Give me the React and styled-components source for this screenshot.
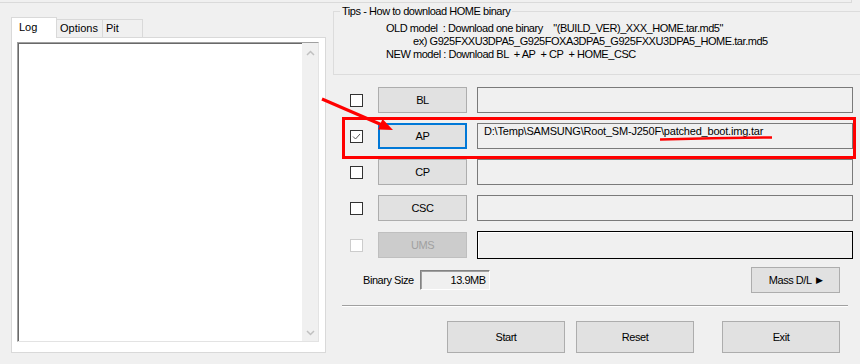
import React from "react";
import styled, { createGlobalStyle, css } from "styled-components";

const GlobalStyle = createGlobalStyle`
body{
  margin:0;
  background:#f0f0f0;
}
`

const Page = styled.div`
position:relative;
width:860px;
height:364px;
overflow:hidden;
background:#f0f0f0;
font-family:"Liberation Sans", Arial, sans-serif;
font-size:11px;
letter-spacing:-0.45px;
color:#000;
`

const TopStrip = styled.div`
width:851px;
height:2px;
border-right:1px solid #dadada;
border-bottom:1px solid #dadada;
`

const Main = styled.div`
display:flex;
align-items:flex-start;
`

const LeftCol = styled.div`
margin-left:11px;
padding-top:14px;
width:315px;
`

const TabStrip = styled.div`
display:flex;
align-items:flex-end;
height:20px;
`

const Tab = styled.div`
box-sizing:border-box;
border:1px solid #d9d9d9;
border-bottom:none;
width:${(p) => p.w}px;
line-height:17px;
letter-spacing:0;
${(p) => p.active ? css`
  position:relative;
  z-index:1;
  height:21px;
  margin-bottom:-1px;
  background:#fff;
  padding-left:7px;
  line-height:19px;
` : css`
  height:18px;
  background:#f0f0f0;
  border-left:none;
  padding-left:3px;
`}
`

const TabPanel = styled.div`
box-sizing:border-box;
height:316px;
background:#fff;
border:1px solid #d9d9d9;
padding:4px 0 0 5px;
`

const LogBox = styled.div`
box-sizing:border-box;
display:flex;
width:302px;
height:300px;
background:#fff;
border:1px solid;
border-color:#a0a0a0 #e3e3e3 #e3e3e3 #a0a0a0;
box-shadow:inset 1px 1px 0 #696969;
`

const LogText = styled.div`
flex:1;
`

const ScrollBar = styled.div`
display:flex;
flex-direction:column;
justify-content:space-between;
align-items:center;
width:16px;
background:#f0f0f0;
padding:7px 0 5px;
`

const RightCol = styled.div`
width:527px;
margin-left:7px;
`

const Group = styled.fieldset`
box-sizing:border-box;
margin:1px -10px 0 0;
padding:0;
height:71px;
border:1px solid #dcdcdc;
`

const GroupTitle = styled.legend`
margin-left:6px;
padding:0 2px;
line-height:14px;
`

const Tips = styled.div`
margin-top:4px;
padding-left:52px;
line-height:13px;
white-space:pre;
`

const TipLine = styled.div`
padding-left:${(p) => p.indent || 0}px;
`

const Rows = styled.div`
display:flex;
flex-direction:column;
gap:10px;
margin-top:12px;
`

const Row = styled.div`
display:grid;
grid-template-columns:18px 89px 1fr;
column-gap:10px;
align-items:center;
height:26px;
padding:0 7px 0 17px;
`

const CheckBox = styled.div`
box-sizing:border-box;
width:13px;
height:13px;
background:#fff;
border:1px solid ${(p) => p.disabled ? "#cccccc" : "#333333"};
display:flex;
align-items:center;
justify-content:center;
`

const Button = styled.div`
box-sizing:border-box;
display:flex;
align-items:center;
justify-content:center;
height:${(p) => p.h || 26}px;
width:${(p) => p.w ? p.w + "px" : "auto"};
background:${(p) => p.disabled ? "#cccccc" : "#e1e1e1"};
border:${(p) => p.focus ? "2px solid #0078d7" : p.disabled ? "1px solid #bfbfbf" : "1px solid #adadad"};
color:${(p) => p.disabled ? "#a0a0a0" : "#000"};
`

const PathField = styled.div`
box-sizing:border-box;
height:${(p) => p.dark ? 28 : 26}px;
border:1px solid ${(p) => p.dark ? "#000" : "#7a7a7a"};
box-shadow:${(p) => p.dark ? "inset 1px 1px 0 #fff" : "none"};
background:#f0f0f0;
padding:1px 0 0 6px;
line-height:13px;
letter-spacing:-0.2px;
white-space:nowrap;
`

const SizeRow = styled.div`
display:flex;
align-items:center;
height:26px;
margin-top:10px;
padding-left:30px;
`

const SizeField = styled.div`
box-sizing:border-box;
width:70px;
height:20px;
margin-left:6px;
border:1px solid;
border-color:#838383 #fff #fff #838383;
box-shadow:inset 1px 1px 0 #a0a0a0;
text-align:right;
padding-right:3px;
line-height:18px;
`

const MassButton = styled(Button)`
margin-left:auto;
margin-right:20px;
`

const Arrow = styled.span`
font-size:9px;
margin-left:4px;
`

const Separator = styled.div`
height:1px;
margin:12px 12px 0 9px;
background:#a0a0a0;
border-bottom:1px solid #fff;
`

const ActionBar = styled.div`
display:flex;
margin-top:14px;
padding-left:114px;
`

const ActionButton = styled(Button)`
margin-left:${(p) => p.gap || 0}px;
`

const Marks = styled.svg`
position:absolute;
left:0;
top:0;
pointer-events:none;
`

const files = [
  { key: "BL" },
  { key: "AP", checked: true, focus: true, path: "D:\\Temp\\SAMSUNG\\Root_SM-J250F\\patched_boot.img.tar" },
  { key: "CP" },
  { key: "CSC" },
  { key: "UMS", disabled: true },
];

function Chevron({ down }) {
  return (
    <svg width="9" height="6" viewBox="0 0 9 6">
      <path d={down ? "M1 1 L4.5 4.5 L8 1" : "M1 5 L4.5 1.5 L8 5"} fill="none" stroke="#c0c0c0" strokeWidth="1.5" />
    </svg>
  );
}

function App() {
  return (
    <>
      <GlobalStyle />
      <Page>
        <TopStrip />
        <Main>
          <LeftCol>
            <TabStrip>
              <Tab active w={46}>Log</Tab>
              <Tab w={46}>Options</Tab>
              <Tab w={40}>Pit</Tab>
            </TabStrip>
            <TabPanel>
              <LogBox>
                <LogText />
                <ScrollBar>
                  <Chevron />
                  <Chevron down />
                </ScrollBar>
              </LogBox>
            </TabPanel>
          </LeftCol>

          <RightCol>
            <Group>
              <GroupTitle>Tips - How to download HOME binary</GroupTitle>
              <Tips>
                <TipLine>{"OLD model  : Download one binary    \"(BUILD_VER)_XXX_HOME.tar.md5\""}</TipLine>
                <TipLine indent={27}>ex) G925FXXU3DPA5_G925FOXA3DPA5_G925FXXU3DPA5_HOME.tar.md5</TipLine>
                <TipLine>{"NEW model : Download BL  + AP  + CP  + HOME_CSC"}</TipLine>
              </Tips>
            </Group>

            <Rows>
              {files.map((f) => (
                <Row key={f.key}>
                  <CheckBox disabled={f.disabled}>
                    {f.checked && (
                      <svg width="9" height="7" viewBox="0 0 9 7">
                        <path d="M1 3.5 L3.5 6 L8 1" fill="none" stroke="#555" strokeWidth="1" />
                      </svg>
                    )}
                  </CheckBox>
                  <Button focus={f.focus} disabled={f.disabled}>{f.key}</Button>
                  <PathField dark={f.disabled}>{f.path}</PathField>
                </Row>
              ))}
            </Rows>

            <SizeRow>
              <span>Binary Size</span>
              <SizeField>13.9MB</SizeField>
              <MassButton w={89}>Mass D/L<Arrow>▶</Arrow></MassButton>
            </SizeRow>

            <Separator />

            <ActionBar>
              <ActionButton w={118} h={32}>Start</ActionButton>
              <ActionButton w={118} h={32} gap={11}>Reset</ActionButton>
              <ActionButton w={118} h={32} gap={28}>Exit</ActionButton>
            </ActionBar>
          </RightCol>
        </Main>

        <Marks width="860" height="364">
          <rect x="343.5" y="118.5" width="511" height="39" fill="none" stroke="#ff0000" strokeWidth="3" />
          <line x1="322" y1="99" x2="381" y2="124.5" stroke="#ff0000" strokeWidth="3" />
          <polygon points="393,130 378,129.5 382.5,119" fill="#ff0000" />
          <path d="M660 139.5 Q715 138 772 137.5" fill="none" stroke="#ff0000" strokeWidth="2.5" />
        </Marks>
      </Page>
    </>
  );
}

export default App;
